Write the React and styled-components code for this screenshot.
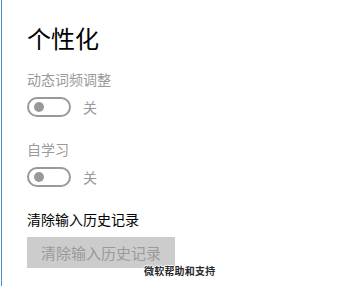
import React from 'react';
import styled, { createGlobalStyle } from 'styled-components';

const GlobalStyle = createGlobalStyle`
  html, body {
    margin: 0;
    padding: 0;
    background: #ffffff;
  }
  body {
    font-family: "Noto Sans CJK SC", "Noto Sans", sans-serif;
  }
`;

const Page = styled.div`
  position: relative;
  width: 355px;
  height: 286px;
  box-sizing: border-box;
  border-left: 1px solid #4f8fca;
  margin-left: 1px;
  padding: 20px 0 0 25px;
  overflow: hidden;
  background: #ffffff;
`;

const Title = styled.h1`
  margin: 0 0 13px 0;
  font-size: 24px;
  font-weight: 400;
  line-height: 36px;
  color: #000000;
`;

const Label = styled.div`
  font-size: 14px;
  line-height: 20px;
  color: ${(p) => (p.$dark ? '#000000' : '#9a9a9a')};
  margin-bottom: ${(p) => p.$gap ?? 8}px;
`;

const ToggleRow = styled.div`
  display: flex;
  align-items: center;
  gap: 12px;
  height: 20px;
  margin-bottom: 22px;
`;

const Track = styled.div`
  width: 44px;
  height: 20px;
  box-sizing: border-box;
  border: 2px solid #999999;
  border-radius: 10px;
  display: flex;
  align-items: center;
  padding-left: 5px;
`;

const Knob = styled.div`
  width: 10px;
  height: 10px;
  border-radius: 50%;
  background: #999999;
`;

const ToggleText = styled.span`
  font-size: 14px;
  line-height: 20px;
  color: #999999;
`;

const ClearButton = styled.button`
  display: block;
  width: 148px;
  height: 31px;
  border: none;
  background: #cccccc;
  color: #9a9a9a;
  font-family: inherit;
  font-size: 15px;
  padding: 0;
  margin: 0;
`;

const HelpLink = styled.div`
  position: absolute;
  left: 142px;
  top: 264px;
  font-size: 10px;
  line-height: 14px;
  font-weight: 700;
  color: #2a2a2a;
  letter-spacing: 0.2px;
  text-shadow: 1px 0 0 #ffffff, -1px 0 0 #ffffff, 0 1px 0 #ffffff, 0 -1px 0 #ffffff;
`;

const Toggle = ({ label }) => (
  <ToggleRow>
    <Track>
      <Knob />
    </Track>
    <ToggleText>{label}</ToggleText>
  </ToggleRow>
);

export default function App() {
  return (
    <>
      <GlobalStyle />
      <Page>
        <Title>个性化</Title>
        <Label>动态词频调整</Label>
        <Toggle label="关" />
        <Label>自学习</Label>
        <Toggle label="关" />
        <Label $dark $gap={8}>清除输入历史记录</Label>
        <ClearButton>清除输入历史记录</ClearButton>
        <HelpLink>微软帮助和支持</HelpLink>
      </Page>
    </>
  );
}
